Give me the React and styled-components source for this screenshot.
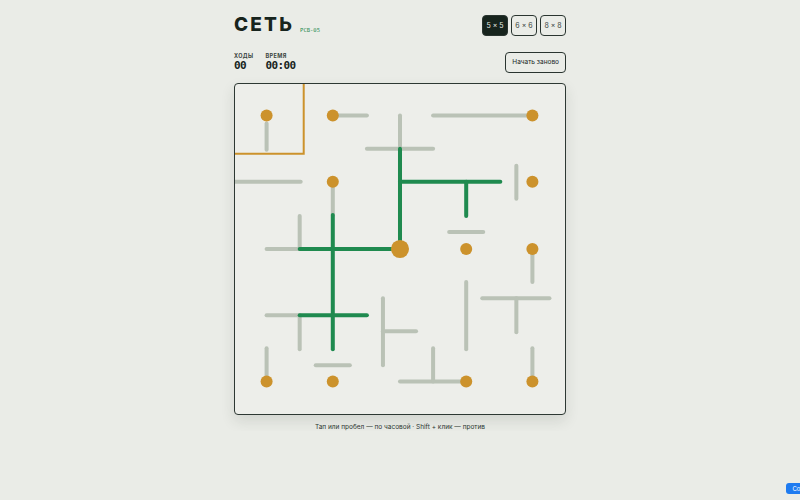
import React from "react";
import styled, { createGlobalStyle } from "styled-components";

const Global = createGlobalStyle`
  html, body { margin: 0; padding: 0; background: #eaece7; }
  body { font-family: Inter, "Noto Sans", sans-serif; color: #17241d; }
`;

const Page = styled.div`
  width: 332px;
  margin: 0 auto;
  padding-top: 14px;
  display: flex;
  flex-direction: column;
`;

const Header = styled.div`
  display: flex;
  align-items: center;
  justify-content: space-between;
  height: 22px;
`;

const TitleWrap = styled.div`
  display: flex;
  align-items: flex-end;
  gap: 6px;
`;

const Title = styled.h1`
  margin: 0;
  font-family: Inter, sans-serif;
  font-weight: 800;
  font-size: 19px;
  letter-spacing: 2.2px;
  line-height: 22px;
  color: #17241d;
`;

const Code = styled.span`
  font-family: "DejaVu Sans Mono", monospace;
  font-size: 5.5px;
  color: #1f8a4f;
  margin-bottom: 3px;
`;

const SizeGroup = styled.div`
  display: flex;
  gap: 3px;
`;

const SizeButton = styled.button`
  width: 26px;
  height: 21px;
  padding: 0;
  border-radius: 4px;
  border: 1.5px solid #2a3530;
  background: ${(p) => (p.$active ? "#17241d" : "transparent")};
  color: ${(p) => (p.$active ? "#e8ece6" : "#3a4540")};
  font-family: Inter, sans-serif;
  font-size: 7px;
  cursor: pointer;
`;

const StatsRow = styled.div`
  display: flex;
  align-items: center;
  justify-content: space-between;
  margin-top: 15px;
  height: 22px;
`;

const Stats = styled.div`
  display: flex;
  gap: 12px;
`;

const Stat = styled.div`
  display: flex;
  flex-direction: column;
  gap: 1px;
`;

const StatLabel = styled.span`
  font-family: Inter, sans-serif;
  font-weight: 700;
  font-size: 5.5px;
  letter-spacing: 0.4px;
  color: #3a4540;
`;

const StatValue = styled.span`
  font-family: "DejaVu Sans Mono", monospace;
  font-size: 11px;
  font-weight: 600;
  line-height: 12px;
  color: #17241d;
  letter-spacing: -0.6px;
`;

const RestartButton = styled.button`
  height: 21px;
  padding: 0 6px;
  border-radius: 4px;
  border: 1.5px solid #2a3530;
  background: transparent;
  font-family: Inter, sans-serif;
  font-size: 6.5px;
  color: #17241d;
  cursor: pointer;
`;

const Board = styled.div`
  margin-top: 10px;
  width: 332px;
  height: 332px;
  box-sizing: border-box;
  border: 1.5px solid #2d3833;
  border-radius: 4px;
  background: #edeeea;
  box-shadow: 0 6px 14px rgba(40, 50, 40, 0.12);
  overflow: hidden;
`;

const BoardSvg = styled.svg`
  display: block;
  width: 100%;
  height: 100%;
`;

const Hint = styled.p`
  margin: 8px 0 0;
  text-align: center;
  font-family: Inter, sans-serif;
  font-size: 6.5px;
  color: #2a3530;
`;

const FloatBadge = styled.div`
  position: fixed;
  right: -30px;
  bottom: 6px;
  height: 11px;
  padding: 0 6px;
  border-radius: 3px;
  background: #1e7bf0;
  color: #fff;
  font-family: Inter, sans-serif;
  font-size: 6px;
  line-height: 11px;
`;

const GRAY = "#bac2b6";
const GREEN = "#1f8a4f";
const ORANGE = "#cc922c";

const gray = [
  [267, 124, 267, 150],
  [333, 116, 367, 116],
  [400, 116, 400, 149],
  [367, 149, 433, 149],
  [433, 116, 532, 116],
  [235, 182, 301, 182],
  [333, 182, 333, 215],
  [516, 166, 516, 199],
  [300, 216, 300, 249],
  [267, 249, 300, 249],
  [449, 232, 483, 232],
  [532, 249, 532, 282],
  [267, 315, 300, 315],
  [300, 315, 300, 349],
  [383, 298, 383, 365],
  [383, 331, 416, 331],
  [466, 282, 466, 349],
  [482, 298, 549, 298],
  [516, 298, 516, 332],
  [267, 348, 267, 381],
  [316, 365, 350, 365],
  [400, 381, 466, 381],
  [433, 348, 433, 381],
  [532, 348, 532, 381],
];

const green = [
  [400, 149, 400, 240],
  [400, 182, 500, 182],
  [466, 182, 466, 216],
  [300, 249, 391, 249],
  [333, 215, 333, 349],
  [300, 315, 367, 315],
];

const dots = [
  [267, 116, 6],
  [333, 116, 6],
  [532, 116, 6],
  [333, 182, 6],
  [532, 182, 6],
  [400, 249, 9],
  [466, 249, 6],
  [532, 249, 6],
  [267, 381, 6],
  [333, 381, 6],
  [466, 381, 6],
  [532, 381, 6],
];

export default function App() {
  return (
    <>
      <Global />
      <Page>
        <Header>
          <TitleWrap>
            <Title>СЕТЬ</Title>
            <Code>PCB-05</Code>
          </TitleWrap>
          <SizeGroup>
            <SizeButton $active>5 × 5</SizeButton>
            <SizeButton>6 × 6</SizeButton>
            <SizeButton>8 × 8</SizeButton>
          </SizeGroup>
        </Header>
        <StatsRow>
          <Stats>
            <Stat>
              <StatLabel>ХОДЫ</StatLabel>
              <StatValue>00</StatValue>
            </Stat>
            <Stat>
              <StatLabel>ВРЕМЯ</StatLabel>
              <StatValue>00:00</StatValue>
            </Stat>
          </Stats>
          <RestartButton>Начать заново</RestartButton>
        </StatsRow>
        <Board>
          <BoardSvg viewBox="235.5 84.5 329 329">
            {gray.map(([x1, y1, x2, y2], i) => (
              <line key={"g" + i} x1={x1} y1={y1} x2={x2} y2={y2} stroke={GRAY} strokeWidth="4" strokeLinecap="round" />
            ))}
            {green.map(([x1, y1, x2, y2], i) => (
              <line key={"n" + i} x1={x1} y1={y1} x2={x2} y2={y2} stroke={GREEN} strokeWidth="4" strokeLinecap="round" />
            ))}
            {dots.map(([cx, cy, r], i) => (
              <circle key={"d" + i} cx={cx} cy={cy} r={r} fill={ORANGE} />
            ))}
            <polyline points="234,154 304,154 304,82" fill="none" stroke={ORANGE} strokeWidth="2" />
          </BoardSvg>
        </Board>
        <Hint>Тап или пробел — по часовой · Shift + клик — против</Hint>
      </Page>
      <FloatBadge>Сохранить</FloatBadge>
    </>
  );
}
